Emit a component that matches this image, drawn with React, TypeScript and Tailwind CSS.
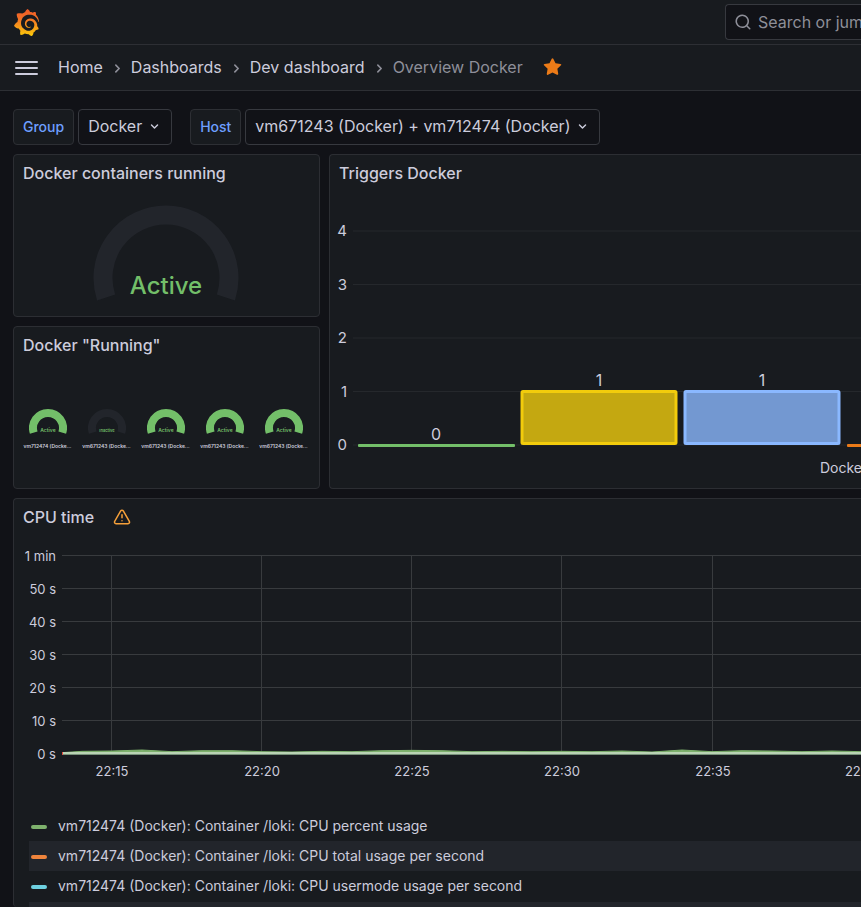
import { ReactNode } from "react"
import { SiGrafana } from "react-icons/si"

const icons = {
  search:
    "M21.71,20.29,18,16.61A9,9,0,1,0,16.61,18l3.68,3.68a1,1,0,0,0,1.42,0A1,1,0,0,0,21.71,20.29ZM11,18a7,7,0,1,1,7-7A7,7,0,0,1,11,18Z",
  angleRight:
    "M14.83,11.29,10.59,7.05a1,1,0,0,0-1.42,0,1,1,0,0,0,0,1.41L12.71,12,9.17,15.54a1,1,0,0,0,0,1.41,1,1,0,0,0,.71.29,1,1,0,0,0,.71-.29l4.24-4.24A1,1,0,0,0,14.83,11.29Z",
  angleDown:
    "M17,9.17a1,1,0,0,0-1.41,0L12,12.71,8.46,9.17a1,1,0,0,0-1.41,0,1,1,0,0,0,0,1.42l4.24,4.24a1,1,0,0,0,1.42,0L17,10.59A1,1,0,0,0,17,9.17Z",
  star:
    "M22,9.67A1,1,0,0,0,21.14,9l-5.69-.83L12.9,3a1,1,0,0,0-1.8,0L8.55,8.16,2.86,9a1,1,0,0,0-.81.68,1,1,0,0,0,.25,1l4.13,4-1,5.68A1,1,0,0,0,6.9,21.44L12,18.77l5.1,2.67a.93.93,0,0,0,.46.12,1,1,0,0,0,.59-.19,1,1,0,0,0,.4-1l-1-5.68,4.13-4A1,1,0,0,0,22,9.67Z",
  warning:
    "M12,16a1,1,0,1,0,1,1A1,1,0,0,0,12,16Zm10.67,1.47-8.05-14a3,3,0,0,0-5.24,0l-8,14A3,3,0,0,0,3.94,22H20.06a3,3,0,0,0,2.61-4.53Zm-1.73,2a1,1,0,0,1-.88.51H3.94a1,1,0,0,1-.88-.51,1,1,0,0,1,0-1l8-14a1,1,0,0,1,1.78,0l8.05,14A1,1,0,0,1,20.94,19.49ZM12,8a1,1,0,0,0-1,1v4a1,1,0,0,0,2,0V9A1,1,0,0,0,12,8Z",
}

function Icon({ name, className }: { name: keyof typeof icons; className?: string }) {
  return (
    <svg viewBox="0 0 24 24" fill="currentColor" className={className} aria-hidden="true">
      <path d={icons[name]} />
    </svg>
  )
}

const crumbs = ["Home", "Dashboards", "Dev dashboard"]

const variables = [
  { id: "group", label: "Group", value: "Docker" },
  { id: "host", label: "Host", value: "vm671243 (Docker) + vm712474 (Docker)" },
]

const containers = [
  { name: "vm712474 (Docke...", active: true },
  { name: "vm671243 (Docke...", active: false },
  { name: "vm671243 (Docke...", active: true },
  { name: "vm671243 (Docke...", active: true },
  { name: "vm671243 (Docke...", active: true },
]

const triggers = [
  { value: 0, stroke: "#73bf69", fill: "#5f9c58" },
  { value: 1, stroke: "#f2cc0c", fill: "#c4a811" },
  { value: 1, stroke: "#8ab8ff", fill: "#7398d1" },
  { value: 0, stroke: "#eb7b18", fill: "#d0670f" },
]

const cpuLabels = ["1 min", "50 s", "40 s", "30 s", "20 s", "10 s", "0 s"]

const times = [
  { label: "22:15", x: 97 },
  { label: "22:20", x: 247 },
  { label: "22:25", x: 397 },
  { label: "22:30", x: 547 },
  { label: "22:35", x: 698 },
  { label: "22:40", x: 848 },
]

// one sample per minute, seconds of CPU
const cpuUsage = [
  0.1, 0.5, 0.6, 0.9, 0.4, 0.7, 0.7, 0.4, 0.3, 0.5, 0.4, 0.7, 0.8, 0.7, 0.4, 0.5, 0.4, 0.5, 0.4,
  0.6, 0.3, 0.9, 0.4, 0.7, 0.6, 0.4, 0.6, 0.4,
]

const series = [
  { color: "bg-[#7eb26d]", name: "vm712474 (Docker): Container /loki: CPU percent usage" },
  { color: "bg-[#ef843c]", name: "vm712474 (Docker): Container /loki: CPU total usage per second" },
  { color: "bg-[#6ed0e0]", name: "vm712474 (Docker): Container /loki: CPU usermode usage per second" },
]

function Panel({ title, extra, className = "", children }: {
  title: string
  extra?: ReactNode
  className?: string
  children: ReactNode
}) {
  return (
    <section className={`flex flex-col overflow-hidden border border-[#2c2e33] bg-[#181b1f] ${className}`}>
      <header className="flex h-9 shrink-0 items-center gap-[19px] px-[9px]">
        <h2 className="text-base font-medium">{title}</h2>
        {extra}
      </header>
      {children}
    </section>
  )
}

// Arc that runs 18 degrees past the horizontal on both sides
function Gauge({ cx, cy, r, width, color }: { cx: number; cy: number; r: number; width: number; color: string }) {
  const dx = r * Math.cos(Math.PI / 10)
  const dy = r * Math.sin(Math.PI / 10)
  return (
    <path
      d={`M${cx - dx},${cy + dy} A${r},${r} 0 1 1 ${cx + dx},${cy + dy}`}
      fill="none"
      stroke={color}
      strokeWidth={width}
    />
  )
}

function TriggersChart() {
  const zero = 254
  const unit = 54
  return (
    <svg className="h-[297px] w-full text-[15px]" role="img" aria-label="Triggers by severity">
      {[4, 3, 2, 1, 0].map((n) => (
        <g key={n}>
          <line x1="23" x2="100%" y1={zero - n * 53.5} y2={zero - n * 53.5} stroke="#25282c" />
          <text x="17" y={zero - n * 53.5 + 5} textAnchor="end" fill="#ccccdc">{n}</text>
        </g>
      ))}
      {triggers.map(({ value, stroke, fill }, i) => {
        const x = 28 + i * 163
        const top = value ? zero - unit : zero
        return (
          <g key={i}>
            {value ? (
              <rect x={x + 1} y={top + 0.5} width="154" height="52" rx="1" fill={fill} stroke={stroke} strokeWidth="3" />
            ) : (
              <rect x={x} y={zero - 1} width="157" height="3" rx="1" fill={stroke} />
            )}
            <text x={x + 78} y={top - 5} textAnchor="middle" className="text-base" fill="#ccccdc">{value}</text>
          </g>
        )
      })}
      <text x="490" y="282" className="text-sm" fill="#ccccdc">Docker</text>
    </svg>
  )
}

function CpuChart() {
  const line = cpuUsage.map((v, i) => `${Math.max(48, 38 + i * 30)},${218 - v * 3.3}`).join(" ")
  return (
    <svg className="h-[276px] w-full shrink-0 text-[13px]" role="img" aria-label="CPU time per container">
      {cpuLabels.map((label, i) => (
        <g key={label}>
          <line x1="48" x2="100%" y1={20.5 + i * 33} y2={20.5 + i * 33} stroke="#383b3e" />
          <text x="42" y={26 + i * 33} textAnchor="end" fill="#ccccdc">{label}</text>
        </g>
      ))}
      {times.map(({ label, x }) => (
        <g key={label}>
          <line x1={x + 0.5} x2={x + 0.5} y1="20" y2="218" stroke="#383b3e" />
          <text x={x + 1} y="241" textAnchor="middle" fill="#ccccdc">{label}</text>
        </g>
      ))}
      <polyline points={`${line} 848,219 48,219`} fill="#7eb26d" />
      <polyline points={line} fill="none" stroke="#7eb26d" strokeWidth="1" />
      <rect x="48" y="217" width="100%" height="2" fill="#b9d3b4" />
      <rect x="48" y="219" width="100%" height="1" fill="#78917a" />
      <rect x="48" y="217" width="1" height="3" fill="#e24d42" />
    </svg>
  )
}

export default function App() {
  return (
    <div className="flex h-screen flex-col overflow-hidden bg-[#111217] font-[Inter,sans-serif] text-base text-[#ccccdc]">
      <header className="flex h-[45px] shrink-0 items-center justify-between border-b border-[#2d2f34] bg-[#181b1f] pl-[13px]">
        <a href="#" aria-label="Grafana">
          <svg className="absolute size-0" aria-hidden="true">
            <linearGradient id="logo" x1="0" y1="0" x2="0" y2="1">
              <stop offset="0" stopColor="#f05a28" />
              <stop offset="0.35" stopColor="#f27026" />
              <stop offset="1" stopColor="#fbca0a" />
            </linearGradient>
          </svg>
          <SiGrafana className="size-[27px]" fill="url(#logo)" />
        </a>
        <label className="flex h-9 w-34 items-center gap-1.5 rounded-l-sm border border-r-0 border-[#37393f] bg-[#111217] pl-2 text-[#8e8f99]">
          <Icon name="search" className="size-[18px] shrink-0" />
          <input
            type="text"
            aria-label="Search"
            placeholder="Search or jump to..."
            className="w-full min-w-0 bg-transparent outline-none placeholder:text-[#8e8f99]"
          />
        </label>
      </header>

      <nav className="flex h-[46px] shrink-0 items-center border-b border-[#2d2f34] bg-[#181b1f] pb-0.5 pl-[15px]" aria-label="Breadcrumbs">
        <button aria-label="Open menu" className="mt-0.5 mr-5 flex w-[23px] flex-col gap-1">
          <span className="h-0.5 rounded-full bg-[#ccccdc]" />
          <span className="h-0.5 rounded-full bg-[#ccccdc]" />
          <span className="h-0.5 rounded-full bg-[#ccccdc]" />
        </button>
        {crumbs.map((crumb) => (
          <div key={crumb} className="flex items-center">
            <a href="#">{crumb}</a>
            <Icon name="angleRight" className="mt-1 mr-1 ml-[5px] size-[19px] text-[#8e8f99]" />
          </div>
        ))}
        <span className="text-[#8e8f99]">Overview Docker</span>
        <button aria-label="Unmark as favorite" className="ml-[19px] text-[#eb7b18]">
          <Icon name="star" className="size-[21px]" />
        </button>
      </nav>

      <main className="flex min-h-0 flex-1 flex-col gap-[9px] pt-[18px] pl-[13px]">
        <div className="flex gap-[18px]">
          {variables.map(({ id, label, value }) => (
            <div key={id} className="flex h-9 gap-1">
              <label htmlFor={id} className="flex items-center rounded-sm border border-[#2d2f34] bg-[#181b1f] px-[9px] text-sm font-medium text-[#6e9fff]">
                {label}
              </label>
              <div className="relative flex">
                <select id={id} className="appearance-none rounded-sm border border-[#37393f] bg-[#111217] pr-7 pb-0.5 pl-[9px]">
                  <option>{value}</option>
                </select>
                <Icon name="angleDown" className="pointer-events-none absolute top-[9px] right-[9px] size-[17px]" />
              </div>
            </div>
          ))}
        </div>

        <div className="flex gap-[9px]">
          <div className="flex w-[307px] shrink-0 flex-col gap-[9px]">
            <Panel title="Docker containers running" className="h-[163px] rounded-sm">
              <svg viewBox="0 0 305 125" className="h-[125px]" role="img" aria-label="Containers running">
                <Gauge cx={152} cy={87} r={63} width={19} color="#22252b" />
                <text x="152" y="103" textAnchor="middle" className="text-2xl font-medium" fill="#73bf69">Active</text>
              </svg>
            </Panel>
            <Panel title={'Docker "Running"'} className="h-[163px] rounded-sm">
              <ul className="grid grid-cols-5 pt-[46px] pr-1.5 pl-1">
                {containers.map(({ name, active }, i) => (
                  <li key={i} className="flex flex-col items-center">
                    <svg className="h-[27px] w-[38px]" role="img" aria-label={name}>
                      <Gauge cx={19} cy={19} r={15} width={8} color={active ? "#73bf69" : "#22252b"} />
                      <text x="19" y="23" textAnchor="middle" className={active ? "text-[5px] font-semibold" : "text-[4px] font-semibold"} fill="#73bf69">
                        {active ? "Active" : "Inactive"}
                      </text>
                    </svg>
                    <span className="mt-1.5 text-[5px] leading-[8px] font-semibold whitespace-nowrap">{name}</span>
                  </li>
                ))}
              </ul>
            </Panel>
          </div>
          <Panel title="Triggers Docker" className="min-w-0 flex-1 rounded-l-sm border-r-0">
            <TriggersChart />
          </Panel>
        </div>

        <Panel
          title="CPU time"
          extra={<Icon name="warning" className="size-[18px] text-[#f5a03a]" />}
          className="min-h-0 flex-1 rounded-l-sm border-r-0 border-b-0"
        >
          <CpuChart />
          <ul className="ml-[15px] text-sm">
            {series.map(({ color, name }) => (
              <li key={name} className="flex h-[30px] items-center gap-[11px] pl-0.5 even:bg-[#22252b]">
                <span className={`mt-0.5 h-1 w-4 rounded-full ${color}`} />
                <button>{name}</button>
              </li>
            ))}
            <li className="mt-px h-[30px] bg-[#22252b]" />
          </ul>
        </Panel>
      </main>
    </div>
  )
}
